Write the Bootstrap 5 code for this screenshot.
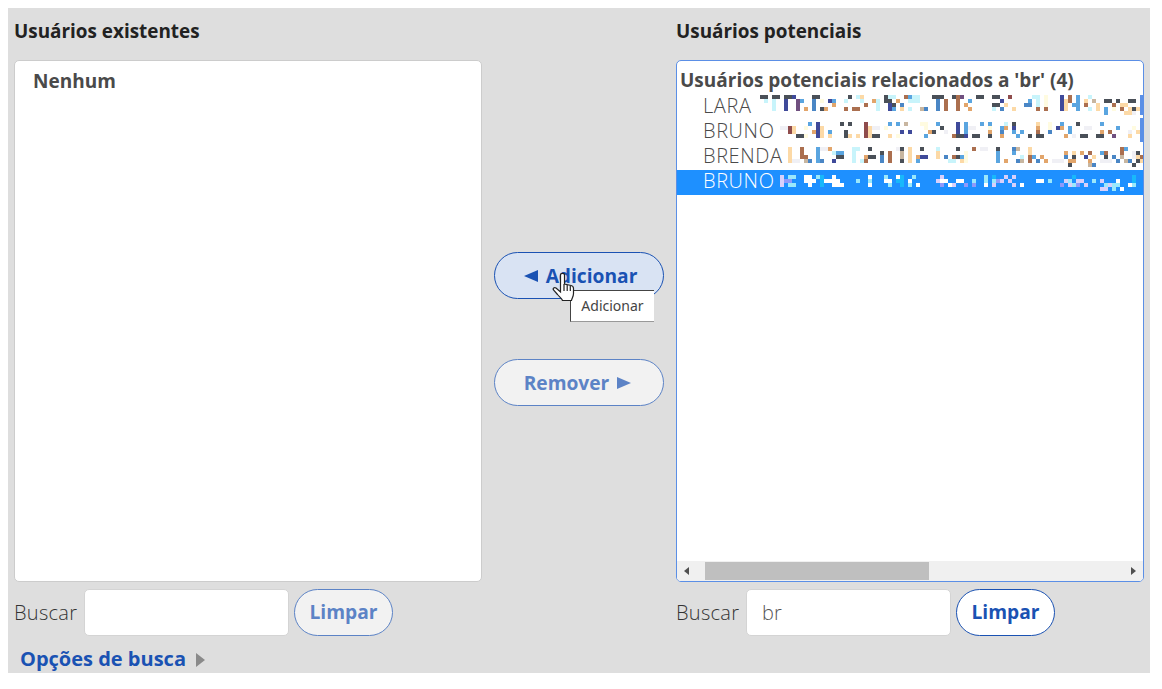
<!DOCTYPE html>
<html lang="pt"><head><meta charset="utf-8">
<link href="https://cdn.jsdelivr.net/npm/bootstrap@5.3.0/dist/css/bootstrap.min.css" rel="stylesheet">
<style>
html,body{height:100%}
body{margin:0;background:#fff;font-family:"Open Sans","Liberation Sans",sans-serif;color:#333;overflow:hidden}
.panel{margin:8px 12px 0 8px;height:665px;width:1142px;background:#dedede;padding:0 6px;position:relative}
.cols{display:grid;grid-template-columns:468px 170px 468px;column-gap:12px}
.head{font-size:18.9px;font-weight:700;color:#222;height:52px;padding-top:10px;line-height:26px;margin:0}
.box{height:522px;background:#fff;border:1px solid #ccc;border-radius:5px;font-size:19px;overflow:hidden;position:relative;color:#4a4a4a}
.box.on{border-color:#5b8fe6}
.none{font-weight:700;padding:8px 18px;line-height:24px}
.grp{font-weight:700;padding:7px 3px 0;line-height:25px;white-space:nowrap}
.opt{height:25px;line-height:25px;padding-left:26px;font-weight:300;font-size:20px;letter-spacing:.6px;white-space:nowrap;position:relative}
.opt.sel{background:#1e90ff;color:#fff;margin-top:2px;line-height:22px}
.mosaic{position:absolute;left:0;top:0;pointer-events:none}
.sb{position:absolute;left:0;right:0;bottom:0;height:20px;background:#f0f0f0}
.thumb{position:absolute;left:28px;width:224px;top:1px;bottom:1px;background:#bfbfbf}
.ar{position:absolute;top:6px;width:0;height:0;border-top:4.5px solid transparent;border-bottom:4.5px solid transparent}
.ar.l{left:7px;border-right:5px solid #505050}
.ar.r{right:7px;border-left:5px solid #505050}
.mid{display:flex;flex-direction:column;padding-top:244px;gap:60px;position:relative}
.pill{height:47px;width:170px;border-radius:24px;border:1px solid #1a52b3;background:#d9e3f3;color:#1a52b3;font-weight:700;font-size:19.2px;line-height:1;padding:0 0 0 3px;display:flex;align-items:center;justify-content:center;gap:8px}
.pill.off{background:#f2f2f2;color:#5c83c6;border-color:#5c83c6;padding:0 3px 0 0}
.tl,.tr{display:inline-block;width:0;height:0;border-top:6.5px solid transparent;border-bottom:6.5px solid transparent}
.tl{border-right:14px solid currentColor}
.tr{border-left:14px solid currentColor}
.find{display:flex;align-items:center;gap:6px;margin-top:7px;height:47px;font-size:20px;letter-spacing:.3px;font-weight:300;color:#333}
.find span{width:64px}
.inp{width:205px;height:47px;border:1px solid #d4d4d4;border-radius:5px;background:#fff;font-size:20px;padding:0 15px;font-family:inherit;font-weight:300;color:#555}
.clr{height:47px;width:99px;border-radius:24px;border:1px solid #1a52b3;background:#fff;color:#1a52b3;font-weight:700;font-size:19.2px;letter-spacing:0;padding:0;margin-left:-1px}
.clr.off{background:#f2f2f2;color:#5c83c6;border-color:#5c83c6}
.more{display:flex;align-items:center;gap:10px;margin:11px 0 0 6px;height:24px;font-weight:700;font-size:20px;color:#1a52b3}
.tri{width:0;height:0;border-top:7.5px solid transparent;border-bottom:7.5px solid transparent;border-left:9px solid #8a8a8a;margin-top:2px}
.tip{position:absolute;left:76px;top:282px;width:84px;height:32px;background:#fff;border-top:1px solid #444;border-left:1px solid #444;border-bottom:1px solid #999;font:14px/30px "Noto Sans",sans-serif;text-align:center;color:#444}
.hand{position:absolute;left:58px;top:264px}
</style></head><body>
<div class="panel">
<div class="cols">
 <div>
  <h2 class="head">Usuários existentes</h2>
  <div class="box"><div class="none">Nenhum</div></div>
  <div class="find"><span>Buscar</span><input class="inp" type="text"><button class="clr off" type="button">Limpar</button></div>
  <div class="more"><span>Opções de busca</span><span class="tri"></span></div>
 </div>
 <div class="mid">
  <button class="pill" type="button"><span class="tl"></span>Adicionar</button>
  <button class="pill off" type="button">Remover<span class="tr"></span></button>
  <div class="tip">Adicionar</div>
  <svg class="hand" width="23" height="31" viewBox="0 0 23 31"><path d="M8.500 3c0-2.300 4-2.300 4 0v9l6.500 1.500c1.800.4 2.500 1.400 2.500 3v5c0 3-1.500 4.500-2 7h-9c-1-2.500-3-3.500-5-6L1.500 18c-1-1.600.8-3.200 2.500-2l4.500 4z" fill="#fff" stroke="#222" stroke-width="1.200"/><path d="M12 12v7M15.200 13v6M18.300 14v5" stroke="#222" stroke-width="1.200"/></svg>
 </div>
 <div>
  <h2 class="head">Usuários potenciais</h2>
  <div class="box on" id="lb">
   <div class="grp">Usuários potenciais relacionados a 'br' (4)</div>
   <div class="opt">LARA</div>
   <div class="opt">BRUNO</div>
   <div class="opt">BRENDA</div>
   <div class="opt sel">BRUNO</div>
   <svg class="mosaic" id="mz" width="466" height="140" shape-rendering="crispEdges"></svg>
   <div class="sb"><span class="ar l"></span><span class="thumb"></span><span class="ar r"></span></div>
  </div>
  <div class="find"><span>Buscar</span><input class="inp" type="text" value="br"><button class="clr" type="button">Limpar</button></div>
 </div>
</div>
</div>
<script>
var pal={d:'#4a5058',n:'#3f4a9a',m:'#70507f',b:'#4a86c5',l:'#5aa5e0',c:'#c8f4fb',y:'#fffbe0',p:'#fcd9a6',o:'#e2a56b',r:'#ab6f4f',R:'#8f4c4c',g:'#f0f0f5',t:'#c8b6a0',
W:'#ffffff',V:'#d8d0fb',C:'#9be8fb',Q:'#18b8fb',P:'#8f9afb'};
var blocks=[
[756,95,[
".dd.dd.ddn....dd.......d.cp.....dcc..rlcc...ddd.",
"..c.c..n..ml..b.y.nl..c...c..oc.dd.o..ccc....b.r",
"....c..n..m...b....o.......r..c..nd.b........b.r",
"....c..n..m.o.b.do....r.rr....c..nl.p.c..tb..b.r"]],
[952,95,[
"drm...dd..dd..R.....cc.y...n.r.l..c.............",
".r..l.......n......l.c.y...npr.l.p.t..dd.d..dd..",
".r.o......dd.p....bb.c.y...np.ll.r..p...r.pp....",
".r..o.....c.b..p.....r.r...np..l..c.p.l.y.r.pdp.",
"......................................l....ppg.."]],
[756,122,[
".............l.n.....d.d...R.....l.l.t...yy..l..",
"......ggRp..y..np..........Rpgg.y.........y...d.",
"........Rp....onp.l...d....Rp.......n.n....od..g",
"..........ddy..np.p...dp.p.Rpdd..p.y......l....."]],
[952,122,[
".n.l...l.l...c.d.....p..y..l...d.....l..........",
".n.lgg...y..lo.n.....o..y.no.l...gg......l...y..",
".n.l.....o..b..l.l...r..b....l.......o.r....g.p.",
"rddn.dd..d..o...l..d.dd.....o.g.dd..dd..m...p..dd"]],
[756,147,[
"........p..r...lggo.....cc..d......gd.p..d...c..",
"........p..r...l...cll..c......d.r..t.p......p..",
"........p..rr..l....dd..c..odd.b.r..t.p.onn..p.b",
"........pgg.tb.lb..n....c.cr...b.r..d.p.l.......c"]],
[952,147,[
".d...r.gg..d...bt..p......................rl....",
"...y.......l...l...p........o.p.o.r..lr...r..gd.",
"rdly.......l.....c.rl.o.....b.d..n.p..d.b.t..gpr",
"c.py.......l.o..bt.r.b.o.ggg.oo...o..ggg.b.tb.dp",
".............................d....tb.........d.."]],
[756,175,[
"......V.CC..WW.CQ..W........W...C..WQ..C......V.",
"......VPP...WWW.QWWWW....C..C...WW.QQ.W......VWW",
"......V.CC...W..Q..WWW......W....C..Q.C.W.....P.W"]],
[952,175,[
"........C.Q..V.V..............Q..............Q..",
".WW..C..C.CPV.V......WW.C...VC.VV..C.V...W...Q..",
"V..P.P..W.V....V.W.........P.VCP.V....CVCC..WC..",
".....................................VV.C.W....."]]
];
var s='';
blocks.forEach(function(b){b[2].forEach(function(r,j){for(var i=0;i<r.length;i++){var c=pal[r[i]];if(c){var x=b[0]+i*4-677,y=b[1]+j*4-61;s+='<rect x="'+x+'" y="'+y+'" width="4" height="4" fill="'+c+'"/>';}}});});
s+='<rect x="463" y="34" width="3" height="20" fill="#5b8fe6"/><rect x="463" y="57" width="3" height="24" fill="#5b8fe6"/>';
document.getElementById('mz').innerHTML=s;
</script>
<script src="https://cdn.jsdelivr.net/npm/bootstrap@5.3.0/dist/js/bootstrap.bundle.min.js"></script>
</body></html>
